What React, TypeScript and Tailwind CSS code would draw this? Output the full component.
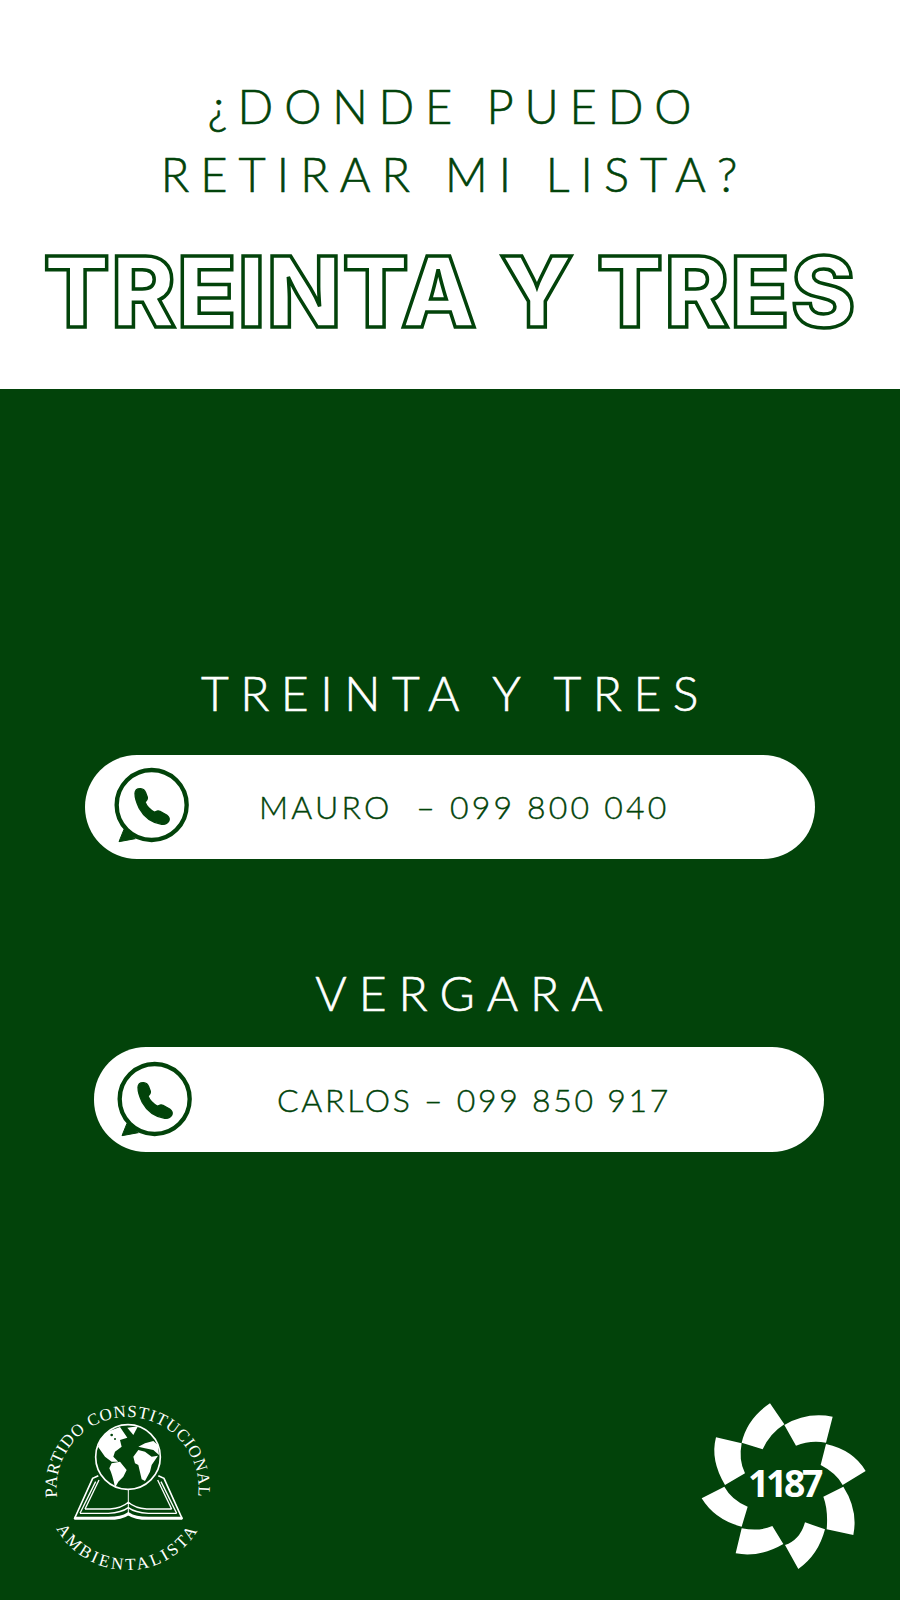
const petals = [
  "M240 40L283 103Q240 130 218 178L155 158Q172 85 240 40Z",
  "M283 105Q350 65 428 80L408 158Q360 150 318 167Z",
  "M408 162Q490 180 527 243L458 285Q440 250 392 225Z",
  "M460 290Q505 360 490 435L410 418Q415 360 400 320Z",
  "M405 418Q385 495 325 537L285 465Q330 450 345 397Z",
  "M280 462Q210 503 137 490L155 415Q210 425 247 408Z",
  "M155 410Q75 390 35 325L103 290Q125 330 173 350Z",
  "M105 285Q60 210 78 142L155 160Q145 210 165 250Z",
];

function WhatsappIcon({ className }: { className: string }) {
  return (
    <svg viewBox="0 0 270 300" className={className}>
      <circle cx="125" cy="135" r="105" fill="none" stroke="#02430a" strokeWidth="13" />
      <path d="M42 208L27 245L76 236Z" fill="#02430a" stroke="#02430a" strokeWidth="3" strokeLinejoin="round" />
      <path
        d="M75 100Q76 85 92 86Q103 87 107 98L112 112Q113 120 105 126Q112 145 134 157Q142 150 150 154L170 165Q180 172 177 182Q170 195 155 193Q110 185 88 145Q75 120 75 100Z"
        fill="#02430a"
        stroke="#02430a"
        strokeWidth="4"
        strokeLinejoin="round"
      />
    </svg>
  );
}

function PartyLogo() {
  return (
    <svg viewBox="0 0 200 190" className="h-[190px] w-[200px]">
      <path id="ringTop" d="M97.5 174A71 71 0 1 1 97.6 174" fill="none" />
      <path id="ringBottom" d="M97.5 21A82 82 0 1 0 97.6 21" fill="none" />
      <text fill="#fff" fontFamily="'Liberation Serif', serif" fontSize="17" letterSpacing="0.8">
        <textPath href="#ringTop" startOffset="50%" textAnchor="middle">
          PARTIDO CONSTITUCIONAL
        </textPath>
      </text>
      <text fill="#fff" fontFamily="'Liberation Serif', serif" fontSize="17" letterSpacing="2.9">
        <textPath href="#ringBottom" startOffset="50%" textAnchor="middle">
          AMBIENTALISTA
        </textPath>
      </text>
      <g transform="translate(40 30) scale(0.3333)" fill="#fff">
        <circle cx="174" cy="126" r="97" fill="#02430a" stroke="#fff" strokeWidth="5" />
        <path d="M84 95Q92 62 118 48L150 36L172 68L150 75L155 95L135 110L130 125L145 140L125 140L105 125Z" />
        <path d="M125 145L150 140L170 165L160 185L145 200L135 218Q128 180 118 160Z" />
        <path d="M190 125L205 105L225 110L245 125L264 122L245 150L240 170L225 198L215 193L205 150L195 145Z" />
        <path d="M205 95L225 85L250 78L264 90L267 120L250 105L225 100Z" />
        <path d="M172 38L204 34L190 60Z" />
        <circle cx="125" cy="60" r="4" fill="#02430a" />
        <circle cx="135" cy="72" r="3" fill="#02430a" />
      </g>
      <g transform="scale(0.3333)" fill="none" stroke="#fff">
        <path d="M133 402L188 280L205 272" strokeWidth="5" />
        <path d="M150 385L197 290" strokeWidth="4" />
        <path d="M165 372L207 285" strokeWidth="4" />
        <path d="M457 402L402 280L385 272" strokeWidth="5" />
        <path d="M440 385L393 290" strokeWidth="4" />
        <path d="M425 372L383 285" strokeWidth="4" />
        <path d="M295 312V385" strokeWidth="3" />
        <path d="M133 400H235Q275 400 295 386Q315 400 355 400H457" strokeWidth="9" />
        <path d="M150 385H235Q275 383 295 368Q315 383 355 385H440" strokeWidth="4" />
        <path d="M165 372H240Q275 370 295 352Q315 370 350 372H425" strokeWidth="4" />
      </g>
    </svg>
  );
}

function StarLogo() {
  return (
    <svg viewBox="0 0 570 570" className="h-[190px] w-[190px]">
      {petals.map((d) => (
        <path key={d} d={d} fill="#fff" />
      ))}
      <text
        x="282"
        y="322"
        fill="#fff"
        textAnchor="middle"
        fontFamily="'Open Sans', sans-serif"
        fontWeight="700"
        fontSize="112"
        letterSpacing="-10"
      >
        1187
      </text>
    </svg>
  );
}

export default function App() {
  return (
    <main className="h-[1600px] w-[900px] overflow-hidden bg-[#02430a] font-['Lato',sans-serif]">
      <header className="flex h-[389px] flex-col items-center bg-white pt-[72px] text-[#02430a]">
        <p className="pl-[10px] text-[47px] leading-[68px] font-light tracking-[0.23em] [-webkit-text-stroke:0.6px_#02430a]">
          ¿DONDE PUEDO
        </p>
        <p className="pl-[9px] text-[47px] leading-[68px] font-light tracking-[0.235em] [-webkit-text-stroke:0.6px_#02430a]">
          RETIRAR MI LISTA?
        </p>
        <h1 className="mt-[29px] font-['Inter',sans-serif] text-[98px] leading-[110px] font-extrabold tracking-[0.01em] whitespace-nowrap text-white [-webkit-text-stroke:3.5px_#02430a]">
          TREINTA Y TRES
        </h1>
      </header>

      <section className="pt-[274px]">
        <h2 className="pl-[11px] text-center text-[48px] leading-[60px] font-light tracking-[0.24em] text-white [-webkit-text-stroke:0.6px_#fff]">
          TREINTA Y TRES
        </h2>
        <div className="mt-[32px] ml-[85px] flex h-[104px] w-[730px] items-center rounded-[52px] bg-white text-[32px] font-light tracking-[0.1em] whitespace-pre text-[#02430a] [-webkit-text-stroke:0.4px_#02430a]">
          <WhatsappIcon className="mt-[6px] ml-[25px] h-[100px] w-[90px] shrink-0" />
          <span className="ml-[59px]">MAURO  – 099 800 040</span>
        </div>

        <h2 className="mt-[104px] pl-[30px] text-center text-[48px] leading-[60px] font-light tracking-[0.25em] text-white [-webkit-text-stroke:0.6px_#fff]">
          VERGARA
        </h2>
        <div className="mt-[24px] ml-[94px] flex h-[105px] w-[730px] items-center rounded-[52px] bg-white text-[32px] font-light tracking-[0.085em] whitespace-pre text-[#02430a] [-webkit-text-stroke:0.4px_#02430a]">
          <WhatsappIcon className="mt-[9px] ml-[19px] h-[100px] w-[90px] shrink-0" />
          <span className="ml-[74px]">CARLOS – 099 850 917</span>
        </div>
      </section>

      <footer className="mt-[233px] flex items-start justify-between pr-[20px] pl-[30px]">
        <PartyLogo />
        <div className="mt-[5px]">
          <StarLogo />
        </div>
      </footer>
    </main>
  );
}
